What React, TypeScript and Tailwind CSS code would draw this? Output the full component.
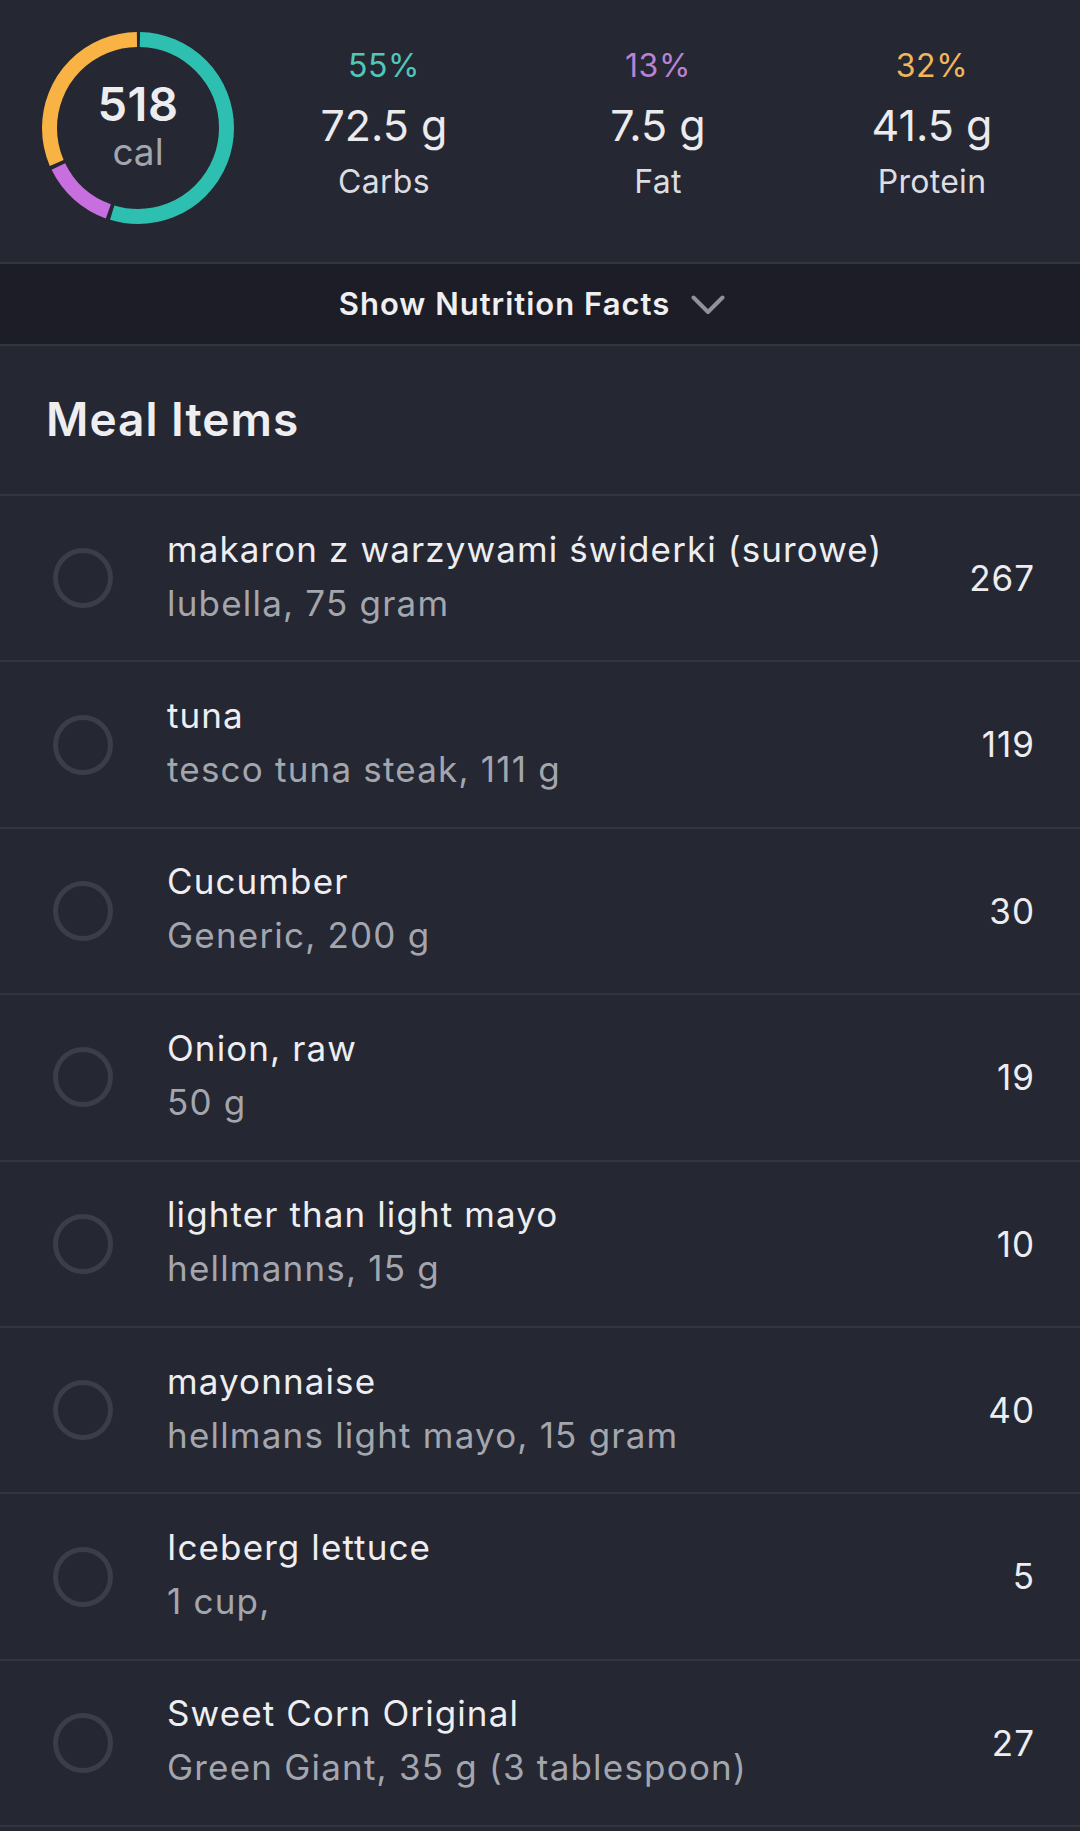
import React from "react";

const items = [
  { t: "makaron z warzywami świderki (surowe)", s: "lubella, 75 gram", c: "267" },
  { t: "tuna", s: "tesco tuna steak, 111 g", c: "119" },
  { t: "Cucumber", s: "Generic, 200 g", c: "30" },
  { t: "Onion, raw", s: "50 g", c: "19" },
  { t: "lighter than light mayo", s: "hellmanns, 15 g", c: "10" },
  { t: "mayonnaise", s: "hellmans light mayo, 15 gram", c: "40" },
  { t: "Iceberg lettuce", s: "1 cup,", c: "5" },
  { t: "Sweet Corn Original", s: "Green Giant, 35 g (3 tablespoon)", c: "27" },
];

function Ring() {
  const r = 88.5;
  const C = 2 * Math.PI * r;
  const gap = 4;
  const segs = [
    { from: 0, to: 198, color: "#2dc0b1" },
    { from: 198, to: 245, color: "#c86fe0" },
    { from: 245, to: 360, color: "#f9b345" },
  ];
  return (
    <svg width="192" height="192" viewBox="0 0 192 192">
      <g transform="rotate(-90 96 96)">
        {segs.map((s, i) => {
          const start = (s.from / 360) * C + gap / 2;
          const len = ((s.to - s.from) / 360) * C - gap;
          return (
            <circle
              key={i}
              cx="96"
              cy="96"
              r={r}
              fill="none"
              stroke={s.color}
              strokeWidth="15"
              strokeDasharray={`${len} ${C}`}
              strokeDashoffset={-start}
            />
          );
        })}
      </g>
    </svg>
  );
}

function Macro({ pct, pctColor, value, label }: { pct: string; pctColor: string; value: string; label: string }) {
  return (
    <div className="flex flex-col items-center pt-[46px]">
      <div className={`text-[32px] leading-[40px] tracking-[0.6px] ${pctColor}`}>{pct}</div>
      <div className="mt-[14px] text-[43px] leading-[50px] text-[#ebebee]">{value}</div>
      <div className="mt-[12px] text-[32px] leading-[40px] tracking-[0.3px] text-[#dcdde1]">{label}</div>
    </div>
  );
}

export default function App() {
  return (
    <div
      className="min-h-[1831px] w-[1080px] bg-[#252733] antialiased"
      style={{ fontFamily: "Inter, 'Noto Sans', sans-serif" }}
    >
      {/* Top summary */}
      <div className="flex h-[264px] border-b-2 border-[#32343e] pl-[42px]">
        <div className="relative mt-[32px] h-[192px] w-[192px]">
          <Ring />
          <div className="absolute inset-0 flex flex-col items-center justify-center pb-[4px]">
            <div className="text-[47px] font-semibold leading-[50px] tracking-[0.5px] text-[#ededf0]">518</div>
            <div className="mt-[2px] text-[37px] leading-[42px] text-[#a4a6ae]">cal</div>
          </div>
        </div>
        <div className="ml-[13px] grid w-[822px] grid-cols-3">
          <Macro pct="55%" pctColor="text-[#4fc8ba]" value="72.5 g" label="Carbs" />
          <Macro pct="13%" pctColor="text-[#b983d3]" value="7.5 g" label="Fat" />
          <Macro pct="32%" pctColor="text-[#f2b65a]" value="41.5 g" label="Protein" />
        </div>
      </div>

      {/* Show Nutrition Facts */}
      <div className="flex h-[82px] items-center justify-center gap-[21px] border-b-2 border-[#32343e] bg-[#1c1d26] pr-[16px]">
        <span className="text-[31px] font-semibold tracking-[1px] text-[#efeff1]">Show Nutrition Facts</span>
        <svg width="34" height="20" viewBox="0 0 34 20" className="mt-[2px]">
          <path d="M2.5 2.5 L17 17 L31.5 2.5" fill="none" stroke="#8e909a" strokeWidth="4" strokeLinecap="round" strokeLinejoin="round" />
        </svg>
      </div>

      {/* Meal items header */}
      <div className="flex h-[150px] items-center border-b-2 border-[#32343e] pl-[46px] pb-[2px]">
        <h2 className="text-[46px] font-semibold tracking-[1px] text-[#eeeef1]">Meal Items</h2>
      </div>

      {/* Rows */}
      <div>
        {items.map((it, i) => (
          <div key={i} className="flex h-[166.4px] items-center border-b-2 border-[#32343e] pl-[53px] pr-[45px]">
            <div className="h-[60px] w-[60px] shrink-0 rounded-full border-[5px] border-[#3b3d47]" />
            <div className="ml-[54px] flex min-w-0 flex-1 flex-col pb-[5px]">
              <div className="whitespace-nowrap text-[35px] leading-[54px] tracking-[1.1px] text-[#eeeef1]">{it.t}</div>
              <div className="whitespace-nowrap text-[35px] leading-[54px] tracking-[1.2px] text-[#a4a6ae]">{it.s}</div>
            </div>
            <div className="text-[35px] tracking-[1px] text-[#ededf0]">{it.c}</div>
          </div>
        ))}
      </div>
    </div>
  );
}
